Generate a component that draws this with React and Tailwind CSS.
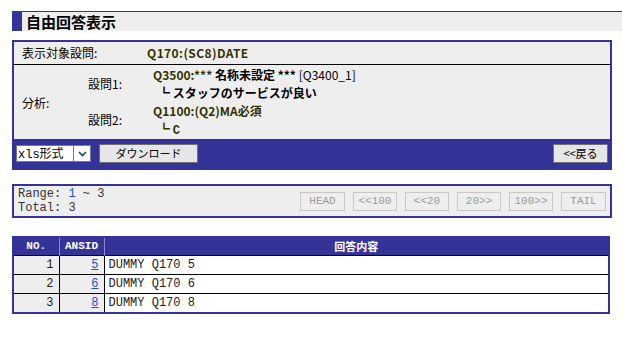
import React from "react";

const jp = "font-['Noto_Sans_CJK_JP','Noto_Sans',sans-serif]";
const mono = "font-['Liberation_Mono','DejaVu_Sans_Mono',monospace]";

const pager = [
    { label: "HEAD", w: "w-[45px]" },
    { label: "<<100", w: "w-[44px]" },
    { label: "<<20", w: "w-[44px]" },
    { label: "20>>", w: "w-[44px]" },
    { label: "100>>", w: "w-[44px]" },
    { label: "TAIL", w: "w-[45px]" },
];

const rows = [
    { no: 1, id: 5, text: "DUMMY Q170 5" },
    { no: 2, id: 6, text: "DUMMY Q170 6" },
    { no: 3, id: 8, text: "DUMMY Q170 8" },
];

function App() {
    return (
        <div className={`w-[622px] h-[338px] bg-white pt-[11px] text-[12px] text-black ${jp}`}>
            {/* title */}
            <div className="ml-[12px] flex h-[20px] border-t border-[#333399] bg-[#eeeeee]">
                <div className="w-[10px] bg-[#333399]" />
                <span className="pl-[4px] text-[15px] font-bold leading-[19px]">自由回答表示</span>
            </div>

            {/* condition box */}
            <div className="ml-[12px] mt-[9px] w-[600px] border-2 border-[#333399] bg-[#eeeeee]">
                <div className="flex h-[23px] items-center border-b border-black">
                    <span className="w-[133px] pl-[8px]">表示対象設問:</span>
                    <span className="font-semibold tracking-[0.4px] text-[#333300]">Q170:(SC8)DATE</span>
                </div>
                <div className="flex h-[74px] pt-[1px]">
                    <div className="flex w-[74px] items-center pl-[8px]">分析:</div>
                    <div className="flex w-[65px] flex-col">
                        <div className="flex h-[36px] items-center">設問1:</div>
                        <div className="flex h-[36px] items-center">設問2:</div>
                    </div>
                    <div className="flex flex-col leading-[18px]">
                        <div className="font-semibold text-[#333300]">
                            Q3500:*** <span className="text-black">名称未設定 ***</span>{" "}
                            <span className="font-normal text-black">[Q3400_1]</span>
                        </div>
                        <div className="pl-[5px] font-semibold">┗ スタッフのサービスが良い</div>
                        <div className="font-semibold text-[#333300]">Q1100:(Q2)MA必須</div>
                        <div className="pl-[5px] font-semibold text-[#333300]">
                            ┗ <span className={mono}>C</span>
                        </div>
                    </div>
                </div>
                <div className="flex h-[29px] items-center bg-[#333399] pl-[2px] pr-[2px]">
                    <div className="flex h-[17px] w-[75px] items-center border border-[#7a7a7a] bg-white">
                        <span className="flex-1 pl-[1px] leading-[15px]">
                            <span className={mono}>xls</span>形式
                        </span>
                        <span className="flex h-[15px] w-[17px] items-center justify-center border-l border-[#7a7a7a]">
                            <svg width="9" height="6" viewBox="0 0 9 6">
                                <path d="M1 1 L4.5 4.5 L8 1" fill="none" stroke="#1a3a8a" strokeWidth="1.6" />
                            </svg>
                        </span>
                    </div>
                    <button className="ml-[8px] h-[19px] w-[99px] border border-[#707070] bg-[#e6e6e6] text-[11px] leading-[17px]">
                        ダウンロード
                    </button>
                    <div className="flex-1" />
                    <button className="h-[19px] w-[55px] border border-[#707070] bg-[#e6e6e6] text-[11px] leading-[17px]">
                        &lt;&lt;戻る
                    </button>
                </div>
            </div>

            {/* range box */}
            <div className="ml-[12px] mt-[14px] flex h-[34px] w-[600px] items-center border-2 border-[#333399] bg-[#eeeeee] pl-[4px] pr-[4px]">
                <div className={`flex-1 text-[12px] leading-[14px] text-[#333] ${mono}`}>
                    <div>
                        Range: <span className="text-[#1f4fd0]">1</span> ~ 3
                    </div>
                    <div>Total: 3</div>
                </div>
                <div className="flex gap-[8px]">
                    {pager.map((p) => (
                        <button
                            key={p.label}
                            className={`${p.w} h-[19px] border border-[#c8c8c8] bg-[#eeeeee] text-[11px] leading-[17px] text-[#9a9a9a] ${mono}`}
                        >
                            {p.label}
                        </button>
                    ))}
                </div>
            </div>

            {/* result table */}
            <table className="ml-[12px] mt-[18px] w-[598px] border-collapse border-2 border-[#333399]">
                <thead>
                    <tr className="h-[18px] bg-[#333399] text-[11px] font-bold text-white">
                        <th className={`w-[46px] border-r border-[#8888cc] p-0 ${mono}`}>NO.</th>
                        <th className={`w-[45px] border-r border-[#8888cc] p-0 ${mono}`}>ANSID</th>
                        <th className="p-0">回答内容</th>
                    </tr>
                </thead>
                <tbody className={`text-[12px] text-[#222] ${mono}`}>
                    {rows.map((r) => (
                        <tr key={r.no} className="h-[19px] border-t border-black">
                            <td className="border-r border-black bg-[#eeeeee] p-0 pr-[5px] text-right">{r.no}</td>
                            <td className="border-r border-black bg-[#eeeeee] p-0 pr-[5px] text-right">
                                <a href="#" className="text-[#1f4fd0] underline">{r.id}</a>
                            </td>
                            <td className="bg-white p-0 pl-[4px]">{r.text}</td>
                        </tr>
                    ))}
                </tbody>
            </table>
        </div>
    );
}

export default App;
